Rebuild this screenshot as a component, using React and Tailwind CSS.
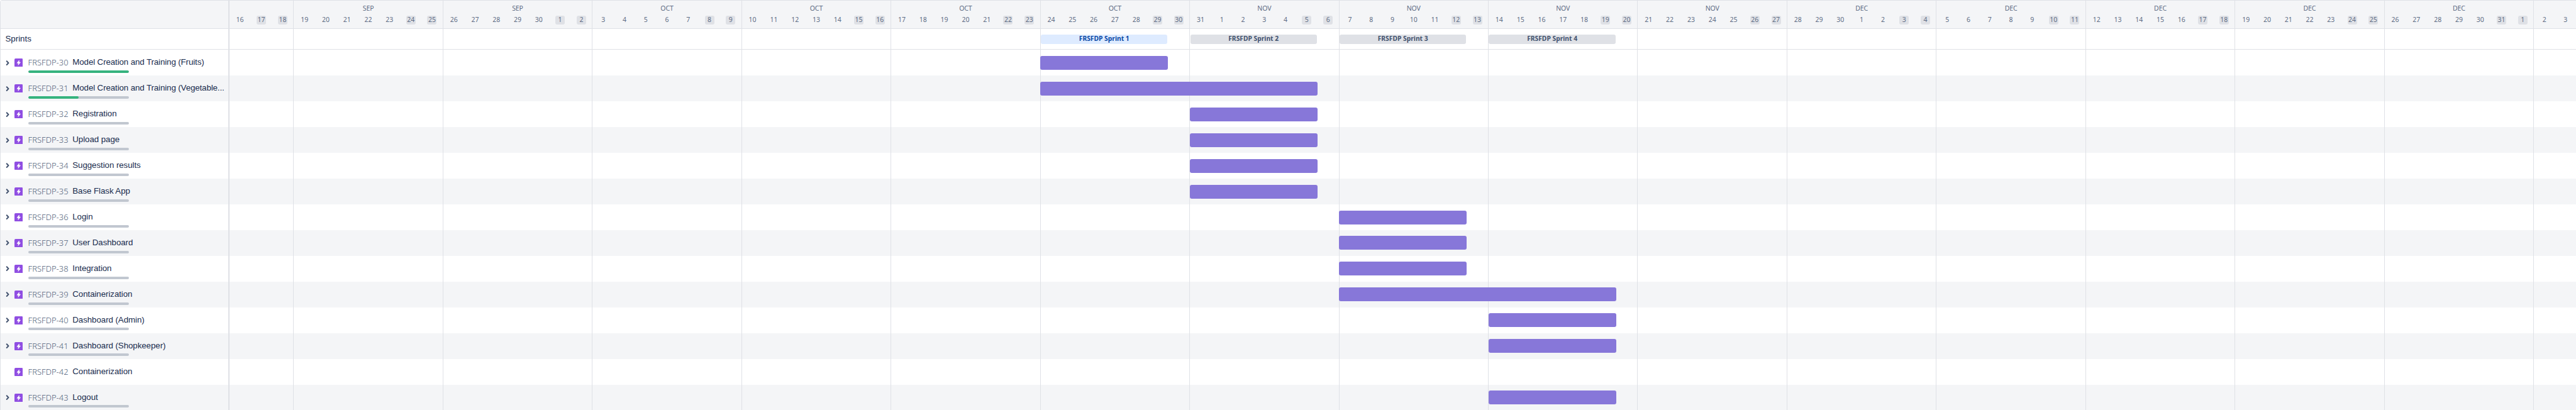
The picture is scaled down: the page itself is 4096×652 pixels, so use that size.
import React from "react";

const DAY = 33.922;
const FIRST = 3;
const ISSUES = [
  { id: 30, name: "Model Creation and Training (Fruits)", done: 100, week: 5, days: 6, tight: true },
  { id: 31, name: "Model Creation and Training (Vegetable...", done: 50, week: 5, days: 13, tight: true },
  { id: 32, name: "Registration", done: 0, week: 6, days: 6 },
  { id: 33, name: "Upload page", done: 0, week: 6, days: 6 },
  { id: 34, name: "Suggestion results", done: 0, week: 6, days: 6 },
  { id: 35, name: "Base Flask App", done: 0, week: 6, days: 6 },
  { id: 36, name: "Login", done: 0, week: 7, days: 6 },
  { id: 37, name: "User Dashboard", done: 0, week: 7, days: 6 },
  { id: 38, name: "Integration", done: 0, week: 7, days: 6 },
  { id: 39, name: "Containerization", done: 0, week: 7, days: 13 },
  { id: 40, name: "Dashboard (Admin)", done: 0, week: 8, days: 6 },
  { id: 41, name: "Dashboard (Shopkeeper)", done: 0, week: 8, days: 6 },
  { id: 42, name: "Containerization", leaf: true },
  { id: 43, name: "Logout", done: 0, week: 8, days: 6 },
];

const MONTHS = ["JAN", "FEB", "MAR", "APR", "MAY", "JUN", "JUL", "AUG", "SEP", "OCT", "NOV", "DEC"];

function dayAt(offset) {
  const d = new Date(Date.UTC(2022, 8, 16 + offset));
  const wd = d.getUTCDay();
  return { n: d.getUTCDate(), month: MONTHS[d.getUTCMonth()], weekend: wd === 0 || wd === 6 };
}

const range = (start, count) => Array.from({ length: count }, (_, i) => dayAt(start + i));
const WEEKS = [
  { days: range(0, 3), label: "" },
  ...Array.from({ length: 15 }, (_, w) => {
    const days = range(FIRST + w * 7, 7);
    return { days, label: days[3].month };
  }),
  { days: range(108, 2), label: "" },
];

const weekX = (w) => (FIRST + w * 7) * DAY;

function Chevron() {
  return (
    <svg viewBox="0 0 8 10" className="h-[10px] w-[8px]" fill="none" stroke="#42526E" strokeWidth="2" strokeLinecap="round" strokeLinejoin="round">
      <path d="M2.7 2.2 5.5 5.1 2.7 8" />
    </svg>
  );
}

function EpicIcon() {
  return (
    <svg viewBox="0 0 16 16" className="h-[13.4px] w-[13.4px]">
      <rect width="16" height="16" rx="2" fill="#904EE2" />
      <path d="M8.9 3.5 4.8 8.7H7.6L7.1 12.5 11.3 7.2H8.5z" fill="#fff" stroke="#fff" strokeWidth="0.8" strokeLinejoin="round" />
    </svg>
  );
}

function Lines({ children }) {
  return (
    <div className="relative flex h-full flex-1 overflow-hidden">
      {WEEKS.map((w, i) => (
        <div
          key={i}
          className={i === 0 ? "h-full shrink-0" : "h-full shrink-0 border-l border-[#DFE1E6]"}
          style={{ width: w.days.length * DAY }}
        />
      ))}
      {children}
    </div>
  );
}

function IssueRow({ issue, index }) {
  return (
    <div className={index % 2 ? "flex h-[40.975px] shrink-0 bg-[#F4F5F7]" : "flex h-[40.975px] shrink-0 bg-white"}>
      <div className="flex w-[364.6px] shrink-0 border-r-2 border-l border-r-[#DFE1E6] border-l-[#DFE1E6] pl-[6.6px]">
        <div className="flex w-[15.5px] shrink-0 pt-[15.6px]">{!issue.leaf && <Chevron />}</div>
        <div className="w-[21.5px] shrink-0 pt-[14px]">
          <EpicIcon />
        </div>
        <div className="flex flex-col pt-[12px]">
          <div className="flex h-[20.8px] whitespace-nowrap">
            <span className="w-[70.7px] font-['Noto_Sans',sans-serif] text-[13px] leading-[17.5px] font-light text-[#505F79]">
              FRSFDP-{issue.id}
            </span>
            <span
              className={
                issue.tight
                  ? "font-['Liberation_Sans',sans-serif] text-[13.35px] leading-[16px] tracking-[-0.12px] text-[#172B4D]"
                  : "font-['Liberation_Sans',sans-serif] text-[13.35px] leading-[16px] tracking-[-0.08px] text-[#172B4D]"
              }
            >
              {issue.name}
            </span>
          </div>
          {!issue.leaf && (
            <div className="h-[4px] w-[160.3px] overflow-hidden rounded-full bg-[#C1C7D0]">
              <div className="h-full rounded-full bg-[#36B37E]" style={{ width: `${issue.done}%` }} />
            </div>
          )}
        </div>
      </div>
      <Lines>
        {!issue.leaf && (
          <div
            className="absolute top-[9.7px] h-[22px] rounded-[3px] bg-[#8777D9]"
            style={{ left: weekX(issue.week) + 0.6, width: issue.days * DAY - 0.3 }}
          />
        )}
      </Lines>
    </div>
  );
}

export default function App() {
  return (
    <div className="flex h-[652px] w-[4096px] flex-col overflow-hidden rounded-tl-[4px] bg-white">
      <div className="flex h-[46px] shrink-0 border-t border-b border-[#DFE1E6] bg-[#F4F5F7]">
        <div className="w-[364.6px] shrink-0 border-r-2 border-l border-[#DFE1E6]" />
        <div className="flex flex-1 overflow-hidden font-['Noto_Sans',sans-serif] text-[10.5px] text-[#5E6C84]">
          {WEEKS.map((w, i) => (
            <div
              key={i}
              className={i === 0 ? "flex shrink-0 flex-col" : "flex shrink-0 flex-col border-l border-[#DFE1E6]"}
              style={{ width: w.days.length * DAY }}
            >
              <div className="h-[24.2px] pt-[3.6px] text-center leading-[16px] tracking-[-0.1px]">{w.label}</div>
              <div className="flex">
                {w.days.map((d, j) => (
                  <div key={j} className="flex flex-1 justify-center">
                    <span
                      className={
                        d.weekend
                          ? "flex h-[14px] w-[15px] items-center justify-center rounded-[3px] bg-[#DFE1E6]"
                          : "flex h-[14px] w-[15px] items-center justify-center"
                      }
                    >
                      {d.n}
                    </span>
                  </div>
                ))}
              </div>
            </div>
          ))}
        </div>
      </div>
      <div className="flex h-[33px] shrink-0 border-b border-[#DFE1E6]">
        <div className="w-[364.6px] shrink-0 border-r-2 border-l border-[#DFE1E6] pt-[7.5px] pl-[7.4px] font-['Liberation_Sans',sans-serif] text-[13.35px] leading-[16px] text-[#172B4D]">
          Sprints
        </div>
        <Lines>
          {[1, 2, 3, 4].map((s) => (
            <div
              key={s}
              className={
                s === 1
                  ? "absolute top-[8.5px] flex h-[15px] items-center justify-center rounded-[3px] bg-[#DEEBFF] font-['Noto_Sans',sans-serif] text-[10.3px] font-bold text-[#0747A6]"
                  : "absolute top-[8.5px] flex h-[15px] items-center justify-center rounded-[3px] bg-[#DFE1E6] font-['Noto_Sans',sans-serif] text-[10.3px] font-bold text-[#42526E]"
              }
              style={{ left: weekX(4 + s) + 1.5, width: 6 * DAY - 2.3 }}
            >
              FRSFDP Sprint {s}
            </div>
          ))}
        </Lines>
      </div>
      {ISSUES.map((issue, i) => (
        <IssueRow key={issue.id} issue={issue} index={i} />
      ))}
    </div>
  );
}
